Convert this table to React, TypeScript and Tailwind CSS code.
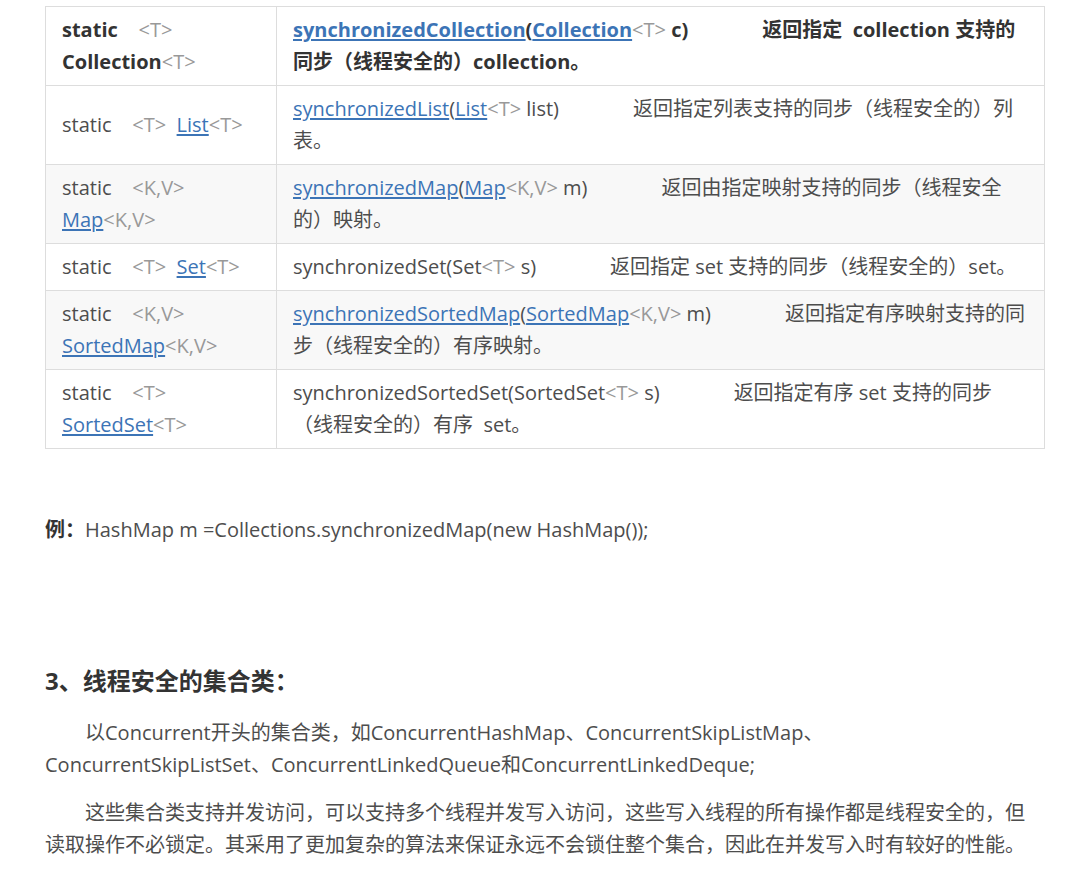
import React from 'react';

const G = ({ children }: { children: React.ReactNode }) => (
  <span className="font-normal text-[#999]">{children}</span>
);

const A = ({ children }: { children: React.ReactNode }) => (
  <a href="#" className="text-[#3c74b6] underline underline-offset-2">
    {children}
  </a>
);

const Gap = () => <span className="inline-block w-[74px]" />;

const Sp = ({ n }: { n: number }) => <>{'\u00a0'.repeat(n)}</>;

export default function App() {
  const rows = [
    {
      bold: true,
      left: (
        <>
          static<Sp n={4} /><G>&lt;T&gt;</G>
          <br />
          Collection<G>&lt;T&gt;</G>
        </>
      ),
      right: (
        <>
          <A>synchronizedCollection</A>(<A>Collection</A><G>&lt;T&gt;</G> c)<Gap />返回指定<Sp n={2} />collection 支持的
          <br />
          同步（线程安全的）collection。
        </>
      ),
    },
    {
      left: (
        <>
          static<Sp n={4} /><G>&lt;T&gt;</G><Sp n={2} /><A>List</A><G>&lt;T&gt;</G>
        </>
      ),
      right: (
        <>
          <A>synchronizedList</A>(<A>List</A><G>&lt;T&gt;</G> list)<Gap />返回指定列表支持的同步（线程安全的）列
          <br />
          表。
        </>
      ),
    },
    {
      left: (
        <>
          static<Sp n={4} /><G>&lt;K,V&gt;</G>
          <br />
          <A>Map</A><G>&lt;K,V&gt;</G>
        </>
      ),
      right: (
        <>
          <A>synchronizedMap</A>(<A>Map</A><G>&lt;K,V&gt;</G> m)<Gap />返回由指定映射支持的同步（线程安全
          <br />
          的）映射。
        </>
      ),
    },
    {
      left: (
        <>
          static<Sp n={4} /><G>&lt;T&gt;</G><Sp n={2} /><A>Set</A><G>&lt;T&gt;</G>
        </>
      ),
      right: (
        <>
          synchronizedSet(Set<G>&lt;T&gt;</G> s)<Gap />返回指定 set 支持的同步（线程安全的）set。
        </>
      ),
    },
    {
      left: (
        <>
          static<Sp n={4} /><G>&lt;K,V&gt;</G>
          <br />
          <A>SortedMap</A><G>&lt;K,V&gt;</G>
        </>
      ),
      right: (
        <>
          <A>synchronizedSortedMap</A>(<A>SortedMap</A><G>&lt;K,V&gt;</G> m)<Gap />返回指定有序映射支持的同
          <br />
          步（线程安全的）有序映射。
        </>
      ),
    },
    {
      left: (
        <>
          static<Sp n={4} /><G>&lt;T&gt;</G>
          <br />
          <A>SortedSet</A><G>&lt;T&gt;</G>
        </>
      ),
      right: (
        <>
          synchronizedSortedSet(SortedSet<G>&lt;T&gt;</G> s)<Gap />返回指定有序 set 支持的同步
          <br />
          （线程安全的）有序<Sp n={2} />set。
        </>
      ),
    },
  ];

  return (
    <div className="min-h-screen bg-white font-['Open_Sans','Noto_Sans_CJK_SC',sans-serif] text-[20px] leading-8 text-[#4d4d4d]">
      <div className="ml-[45px] w-[1000px] pt-[6px]">
        {/* method table */}
        <table className="w-full border-collapse">
          <tbody>
            {rows.map((row, i) => (
              <tr key={i} className={i === 2 || i === 4 ? 'bg-[#f8f8f8]' : 'bg-white'}>
                <td
                  className={`w-[231px] border border-[#ddd] px-4 py-[7px] align-middle whitespace-nowrap ${
                    row.bold ? 'font-bold text-[#333]' : ''
                  }`}
                >
                  {row.left}
                </td>
                <td
                  className={`border border-[#ddd] px-4 py-[7px] align-middle whitespace-nowrap ${
                    row.bold ? 'font-bold text-[#333]' : ''
                  }`}
                >
                  {row.right}
                </td>
              </tr>
            ))}
          </tbody>
        </table>

        <p className="mt-[65px]">
          <span className="font-bold text-[#333]">例：</span>HashMap m =Collections.synchronizedMap(new HashMap());
        </p>

        <h3 className="mt-[117px] text-[24px] leading-9 font-bold text-[#333]">3、线程安全的集合类：</h3>

        <p className="mt-[18px] indent-[2em]">
          以Concurrent开头的集合类，如ConcurrentHashMap、ConcurrentSkipListMap、
          <br />
          ConcurrentSkipListSet、ConcurrentLinkedQueue和ConcurrentLinkedDeque;
        </p>

        <p className="mt-4 indent-[2em]">
          这些集合类支持并发访问，可以支持多个线程并发写入访问，这些写入线程的所有操作都是线程安全的，但
          <br />
          读取操作不必锁定。其采用了更加复杂的算法来保证永远不会锁住整个集合，因此在并发写入时有较好的性能。
        </p>
      </div>
    </div>
  );
}
